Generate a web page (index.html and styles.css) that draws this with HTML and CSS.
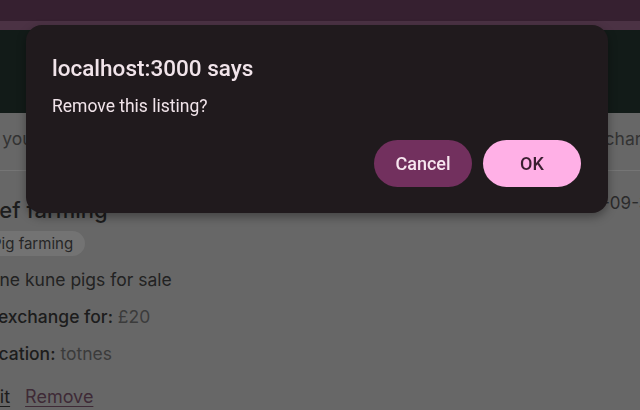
FILE: index.html
```html
<!DOCTYPE html>
<html lang="en">
<head>
<meta charset="utf-8">
<title>Listings</title>
<link rel="stylesheet" href="styles.css">
</head>
<body>
<div class="topbar"></div>
<div class="strip"></div>
<header class="hero"></header>
<div class="page">
  <div class="search-row">
    <span class="search-left">Tell us what you need</span>
    <span class="search-right">Search exchange</span>
  </div>
  <article class="listing">
    <div class="listing-head">
      <h2 class="listing-title">Beef farming</h2>
      <span class="listing-date">2024-09-30</span>
    </div>
    <span class="tag">Pig farming</span>
    <p class="line">Kune kune pigs for sale</p>
    <p class="line"><strong>In exchange for:</strong> <span class="val">£20</span></p>
    <p class="line"><strong>Location:</strong> <span class="val">totnes</span></p>
    <div class="actions"><a href="#" class="link edit">Edit</a><a href="#" class="link remove">Remove</a></div>
  </article>
</div>

<div class="dialog" role="dialog">
  <h1 class="dialog-title">localhost:3000 says</h1>
  <p class="dialog-msg">Remove this listing?</p>
  <div class="dialog-buttons">
    <button class="btn cancel">Cancel</button>
    <button class="btn ok">OK</button>
  </div>
</div>
</body>
</html>
```
FILE: styles.css
```css
html, body {
  margin: 0;
  padding: 0;
}
body {
  width: 640px;
  height: 410px;
  overflow: hidden;
  background: #676767;
  font-family: Inter, "Liberation Sans", sans-serif;
  color: #1f1f1f;
}
.topbar {
  height: 21px;
  background: #362030;
}
.strip {
  height: 9px;
  background: #4b3244;
}
.hero {
  height: 83px;
  background: #121b18;
}
.page {
  margin-left: -22px;
  width: 700px;
}
.search-row {
  height: 58px;
  box-sizing: border-box;
  padding-bottom: 7px;
  display: flex;
  justify-content: space-between;
  align-items: center;
  border-bottom: 1px solid #757575;
  font-size: 17.5px;
  color: #333;
}
.search-left {
  margin-left: -79px;
}
.search-right {
  margin-right: 12px;
}
.listing {
  padding-top: 26px;
}
.listing-head {
  display: flex;
  justify-content: space-between;
  align-items: baseline;
}
.listing-title {
  margin: 0 0 0 -6px;
  font-size: 22px;
  font-weight: 500;
  line-height: 26px;
  color: #1d1d1d;
}
.listing-date {
  font-size: 17px;
  color: #2b2b2b;
  margin-right: 18px;
  position: relative;
  top: -9px;
}
.tag {
  display: inline-block;
  margin-top: 8px;
  padding: 4px 12px 4px 14px;
  border-radius: 13px;
  background: #737373;
  font-size: 15px;
  line-height: 17px;
  color: #262626;
}
.line {
  margin: 12px 0 0;
  font-size: 17.5px;
  line-height: 23px;
  color: #222;
}
.line + .line {
  margin-top: 14px;
}
.line strong {
  font-weight: 500;
  color: #1c1c1c;
}
.val {
  color: #3b3b3b;
}
.actions {
  margin-top: 21px;
  display: flex;
  gap: 15px;
  font-size: 18px;
}
.link {
  text-decoration: underline;
  text-underline-offset: 3px;
}
.edit {
  color: #1c1c1c;
}
.remove {
  color: #3e2a36;
}

.dialog {
  position: fixed;
  left: 26px;
  top: 25px;
  width: 582px;
  height: 188px;
  box-sizing: border-box;
  padding: 24px 27px 26px 26px;
  background: #201a1d;
  border-radius: 16px;
  box-shadow: 0 4px 10px rgba(0, 0, 0, 0.35);
  font-family: Roboto, "Liberation Sans", sans-serif;
  color: #f1e4ea;
  display: flex;
  flex-direction: column;
}
.dialog-title {
  margin: 0;
  font-size: 22.5px;
  font-weight: 500;
  line-height: 38px;
}
.dialog-msg {
  margin: 8px 0 0;
  font-size: 17.5px;
  line-height: 22px;
}
.dialog-buttons {
  margin-top: auto;
  display: flex;
  justify-content: flex-end;
  gap: 11px;
}
.btn {
  width: 98px;
  height: 47px;
  border: none;
  border-radius: 24px;
  font-family: Roboto, "Liberation Sans", sans-serif;
  font-size: 18px;
  font-weight: 500;
}
.cancel {
  background: #72305e;
  color: #f7e6ef;
}
.ok {
  background: #ffb0e6;
  color: #3a1f30;
}
```
